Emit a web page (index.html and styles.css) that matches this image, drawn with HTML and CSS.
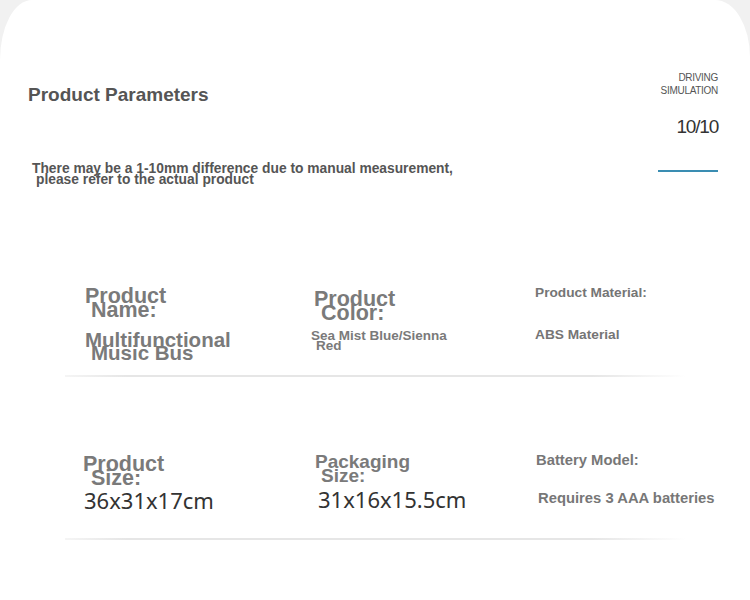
FILE: index.html
```html
<!DOCTYPE html>
<html lang="en">
<head>
<meta charset="utf-8">
<title>Product Parameters</title>
<link rel="stylesheet" href="styles.css">
</head>
<body>
<div class="card">
  <header class="header">
    <div class="intro">
      <h1 class="title">Product Parameters</h1>
      <p class="note"><span class="ln">There may be a 1-10mm difference due to manual measurement,</span><span class="ln ind">please refer to the actual product</span></p>
    </div>
    <div class="badge">
      <div class="sim">DRIVING<br>SIMULATION</div>
      <div class="score">10/10</div>
      <div class="bar"></div>
    </div>
  </header>

  <section class="rows">
    <div class="row row1">
      <div class="cell c11">
        <div class="label big"><span class="ln">Product</span><span class="ln ind6">Name:</span></div>
        <div class="value bold19"><span class="ln">Multifunctional</span><span class="ln ind6">Music Bus</span></div>
      </div>
      <div class="cell c12">
        <div class="label big"><span class="ln">Product</span><span class="ln ind7">Color:</span></div>
        <div class="value bold13"><span class="ln">Sea Mist Blue/Sienna</span><span class="ln ind5">Red</span></div>
      </div>
      <div class="cell c13">
        <div class="label small">Product Material:</div>
        <div class="value small">ABS Material</div>
      </div>
    </div>

    <div class="row row2">
      <div class="cell c21">
        <div class="label big"><span class="ln">Product</span><span class="ln ind8">Size:</span></div>
        <div class="value num">36x31x17cm</div>
      </div>
      <div class="cell c22">
        <div class="label mid"><span class="ln">Packaging</span><span class="ln ind6">Size:</span></div>
        <div class="value num">31x16x15.5cm</div>
      </div>
      <div class="cell c23">
        <div class="label small2">Battery Model:</div>
        <div class="value small2">Requires 3 AAA batteries</div>
      </div>
    </div>
  </section>
</div>
</body>
</html>
```

FILE: styles.css
```css
* { box-sizing: border-box; }

html, body {
  margin: 0;
  padding: 0;
  background: #f1f1f1;
}

body {
  width: 750px;
  height: 600px;
  overflow: hidden;
  font-family: "Liberation Sans", Arial, sans-serif;
}

.card {
  width: 750px;
  height: 600px;
  background: #ffffff;
  border-radius: 32px 35px 0 0 / 60px 57px 0 0;
}

.ln { display: block; white-space: nowrap; }
.ind { padding-left: 4px; }
.ind5 { padding-left: 5px; }
.ind6 { padding-left: 6px; }
.ind7 { padding-left: 7px; }
.ind8 { padding-left: 8px; }

/* header */
.header {
  display: flex;
  justify-content: space-between;
  align-items: flex-start;
  padding: 70px 32px 0 28px;
}

.intro {
  display: flex;
  flex-direction: column;
  align-items: flex-start;
}

.title {
  margin: 14px 0 0 -2px;
  padding: 0 2px;
  font-size: 19px;
  line-height: 22px;
  font-weight: 700;
  color: #555555;
}

.note {
  margin: 57px 0 0 4px;
  font-size: 13.8px;
  line-height: 11px;
  font-weight: 700;
  color: #555555;
}

.badge {
  display: flex;
  flex-direction: column;
  align-items: flex-end;
  text-align: right;
}

.sim {
  margin-top: 1px;
  font-size: 10px;
  line-height: 13px;
  letter-spacing: -0.3px;
  color: #555555;
}

.score {
  margin-top: 19px;
  font-size: 19px;
  line-height: 22px;
  letter-spacing: -1.2px;
  color: #333333;
}

.bar {
  margin-top: 32px;
  width: 60px;
  height: 2px;
  background: #3a8db2;
}

/* rows */
.rows {
  margin: 98px 65px 0 65px;
}

.row {
  display: grid;
  grid-template-columns: 229px 221px 1fr;
  align-items: start;
  padding-left: 20px;
  border-bottom: 2px solid transparent;
  border-image: linear-gradient(90deg, rgba(230,230,230,0.4), #e6e6e6 10%, #e6e6e6 85%, rgba(230,230,230,0)) 1;
}

.row1 { padding-bottom: 16px; }
.row2 { padding-bottom: 24px; }

.label, .value { font-weight: 700; color: #7a7a7a; white-space: nowrap; }

.big { font-size: 21.5px; line-height: 14px; }
.mid { font-size: 19px; line-height: 14px; }
.bold19 { font-size: 20.5px; line-height: 13px; }
.bold13 { font-size: 13.5px; line-height: 10px; }
.small { font-size: 13.7px; line-height: 16px; color: #757575; }
.small2 { font-size: 14.8px; line-height: 16px; color: #777777; }

.num {
  font-family: "Noto Sans", "Open Sans", sans-serif;
  font-weight: 400;
  font-size: 22px;
  line-height: 28px;
  color: #333333;
}

/* cell offsets */
.c11 { margin-top: 6px; }
.c11 .value { margin-top: 16px; }

.c12 { margin-top: 9px; }
.c12 .value { margin-top: 11px; margin-left: -3px; }

.c13 { margin-top: 2px; }
.c13 .value { margin-top: 26px; }

.c21 { margin-top: 80px; margin-left: -2px; }
.c21 .value { margin-top: 1px; margin-left: 1px; }

.c22 { margin-top: 78px; margin-left: 1px; }
.c22 .value { margin-top: 2px; margin-left: 3px; }

.c23 { margin-top: 75px; margin-left: 1px; }
.c23 .value { margin-top: 22px; margin-left: 2px; }
```
